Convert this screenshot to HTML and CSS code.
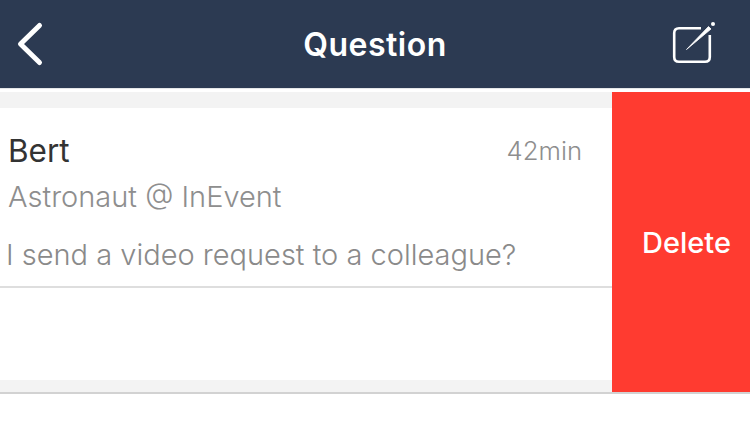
FILE: index.html
```html
<!DOCTYPE html>
<html lang="en">
<head>
<meta charset="utf-8">
<title>Question</title>
<link rel="stylesheet" href="styles.css">
</head>
<body>
<header class="nav">
  <button class="nav-btn" aria-label="Back">
    <svg viewBox="0 0 30 48" width="30" height="48"><path d="M25.5 5.5 L6.5 24 L25.5 42.5" fill="none" stroke="#fff" stroke-width="5" stroke-linecap="round" stroke-linejoin="round"/></svg>
  </button>
  <h1 class="nav-title">Question</h1>
  <button class="nav-btn nav-btn-end" aria-label="Compose">
    <svg viewBox="0 0 46 46" width="46" height="46"><path d="M31 7.2 H9 Q4.2 7.2 4.2 12 V36 Q4.2 40.8 9 40.8 H35 Q39.8 40.8 39.8 36 V14" fill="none" stroke="#fff" stroke-width="2.6"/><path d="M16.5 28.5 L38.5 5.5 L41 8 Z" fill="#fff" stroke="#fff" stroke-width="0.8" stroke-linejoin="round"/><circle cx="43" cy="3" r="2" fill="#fff"/></svg>
  </button>
</header>
<div class="gap-line"></div>
<main class="swipe-row">
  <section class="content">
    <div class="band band-top"></div>
    <article class="card">
      <div class="card-head">
        <span class="name">Bert</span>
        <span class="time">42min</span>
      </div>
      <p class="role">Astronaut @ InEvent</p>
      <p class="question">I send a video request to a colleague?</p>
    </article>
    <div class="card-rest"></div>
    <div class="band band-bottom"></div>
  </section>
  <button class="delete">Delete</button>
</main>
</body>
</html>
```
FILE: styles.css
```css
* { box-sizing: border-box; }
html, body { margin: 0; padding: 0; }
body {
  width: 750px;
  height: 434px;
  overflow: hidden;
  background: #fff;
  font-family: Inter, "Liberation Sans", sans-serif;
}
.nav {
  height: 88px;
  background: #2c3a52;
  display: grid;
  grid-template-columns: 1fr auto 1fr;
  align-items: center;
  padding: 0 14px;
}
.nav-btn {
  border: 0;
  background: none;
  padding: 0;
  margin: 0;
  display: flex;
  line-height: 0;
}
.nav-btn-end { justify-self: end; margin-right: 20px; }
.nav-title {
  margin: 0;
  color: #fff;
  font-size: 32px;
  font-weight: 600;
  letter-spacing: 0.5px;
}
.gap-line { height: 4px; background: #fff; border-top: 1px solid #e4e6e8; }
.swipe-row { display: flex; height: 302px; border-bottom: 2px solid #d2d2d2; }
.content { flex: 1; display: flex; flex-direction: column; }
.band { background: #f3f3f3; }
.band-top { height: 16px; }
.band-bottom { height: 12px; }
.card {
  height: 180px;
  background: #fff;
  border-bottom: 2px solid #dedede;
  padding: 23px 30px 0 8px;
}
.card-rest { flex: 1; background: #fff; }
.card-head { display: flex; justify-content: space-between; align-items: center; }
.name { font-size: 31.5px; color: #333; line-height: 40px; font-weight: 400; }
.time { font-size: 25.7px; color: #8e8e8e; font-weight: 300; line-height: 40px; }
.role { margin: 8px 0 0; font-size: 29px; line-height: 36px; color: #8e8e8e; font-weight: 300; }
.question { margin: 21px 0 0 -2px; font-size: 29px; line-height: 38px; color: #8a8a8a; font-weight: 300; white-space: nowrap; }
.delete {
  width: 138px;
  border: 0;
  background: #ff3b30;
  color: #fff;
  font-family: inherit;
  font-size: 29px;
  font-weight: 500;
  padding: 1px 0 0 11px;
}
```
